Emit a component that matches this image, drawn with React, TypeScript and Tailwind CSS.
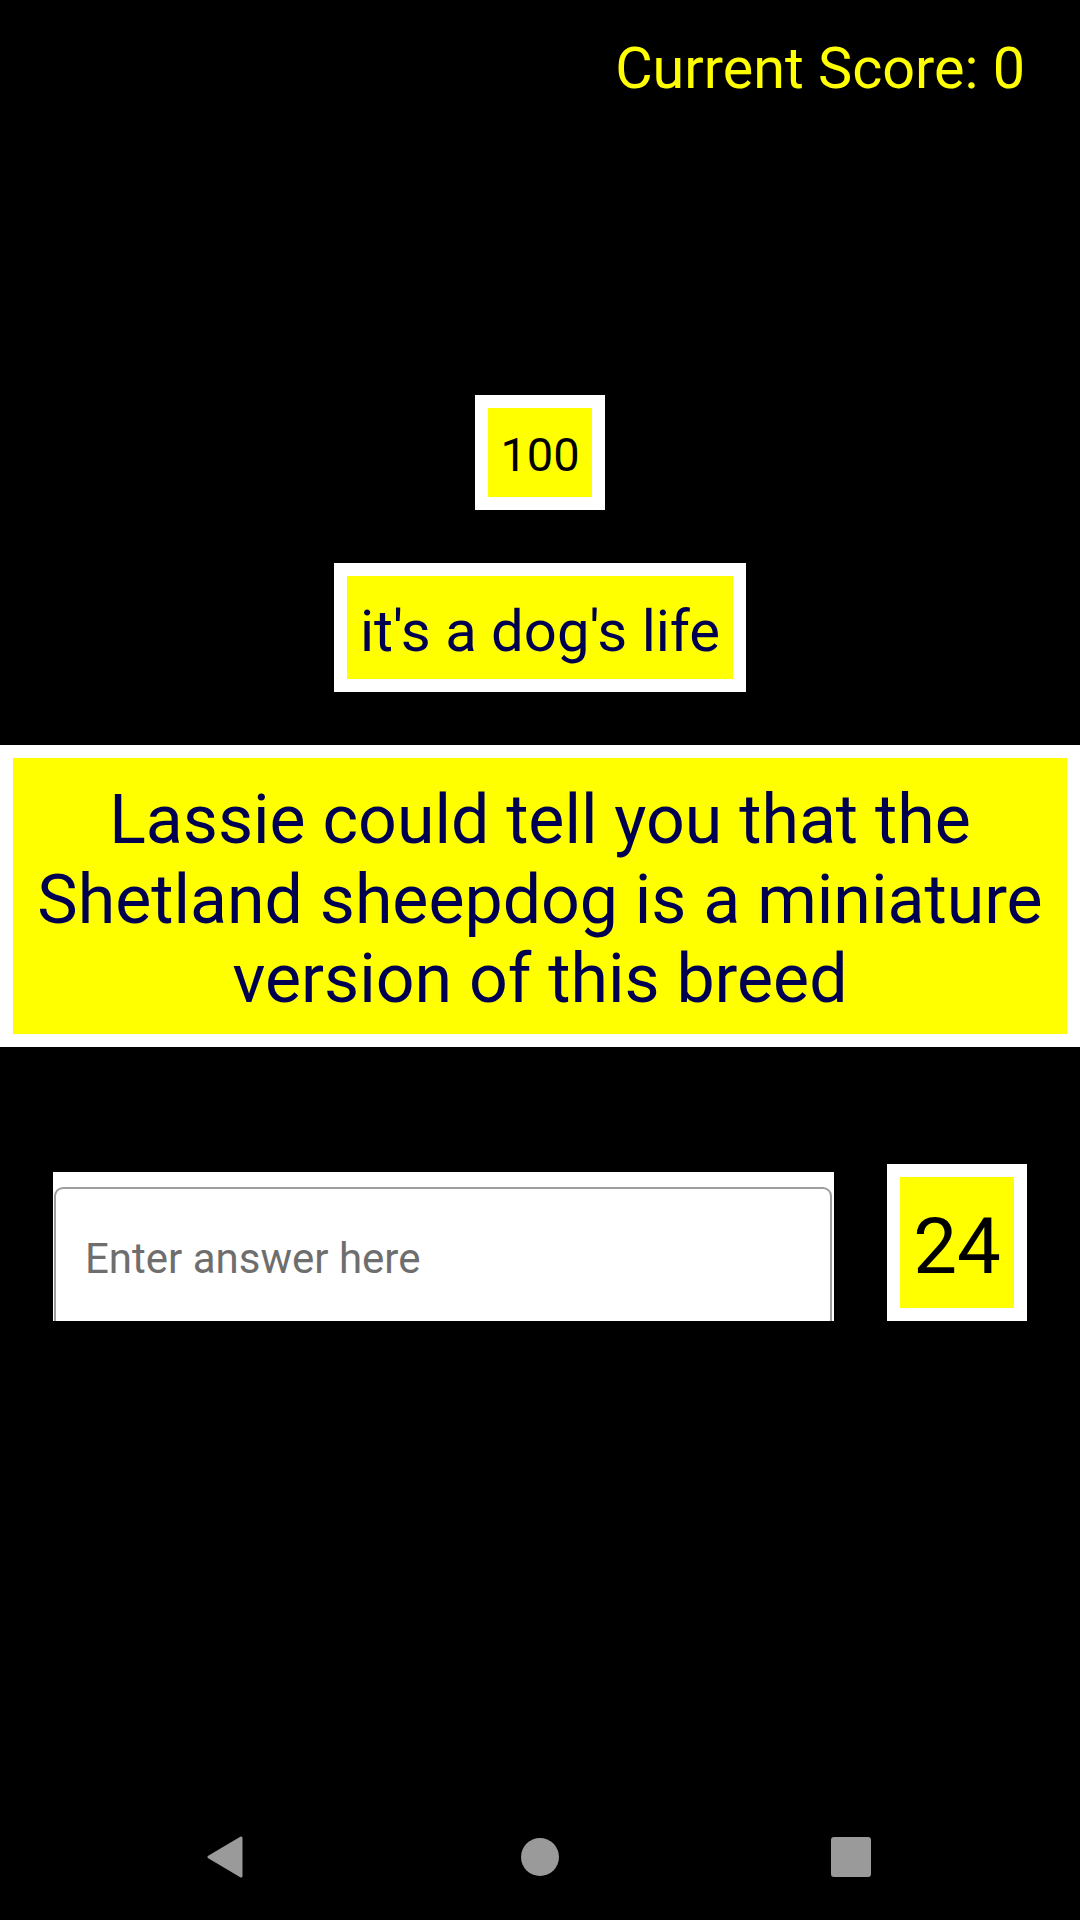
import React from 'react';

const App = () => {
  return (
    <div
      className="flex h-[1920px] w-[1080px] flex-col bg-black"
      style={{ fontFamily: 'Roboto, "Noto Sans", sans-serif' }}
    >
      {/* score */}
      <div className="flex justify-end pr-[55px] pt-[35px]">
        <span className="text-[57.5px] leading-[67px] text-[#ffff00]">Current Score: 0</span>
      </div>

      {/* points */}
      <div className="mt-[293px] flex justify-center">
        <div className="border-[13px] border-white">
          <div className="flex h-[89px] w-[104px] items-center justify-center bg-[#ffff00] pt-[3px] text-[47px] leading-[55px] text-black">
            100
          </div>
        </div>
      </div>

      {/* category */}
      <div className="mt-[53px] flex justify-center">
        <div className="border-[13px] border-white">
          <div className="flex h-[103px] w-[386px] items-center justify-center bg-[#ffff00] pt-[6px] text-[58px] leading-[68px] text-[#000050]">
            it's a dog's life
          </div>
        </div>
      </div>

      {/* question */}
      <div className="mt-[53px] bg-white p-[13px]">
        <div className="bg-[#ffff00] pb-[14px] pt-[23px] text-center text-[68px] leading-[79.5px] text-[#000050]">
          Lassie could tell you that the
          <br />
          Shetland sheepdog is a miniature
          <br />
          version of this breed
        </div>
      </div>

      {/* answer row */}
      <div className="mt-[117px] flex items-end justify-between px-[53px]">
        <div className="h-[149px] w-[781px] overflow-hidden bg-white pl-px pr-[2px] pt-[15px]">
          <input
            placeholder="Enter answer here"
            className="h-[200px] w-full rounded-[9px] border-2 border-[#9e9e9e] bg-white pb-[56px] pl-[29px] text-[42px] text-black outline-none placeholder:text-[#6e6e6e]"
          />
        </div>
        <div className="border-[13px] border-white">
          <div className="flex h-[131px] w-[114px] items-center justify-center bg-[#ffff00] pt-[8px] text-[78px] leading-[91px] text-black">
            24
          </div>
        </div>
      </div>

      {/* nav bar */}
      <div className="mt-auto flex h-[126px] items-center pl-[207px]">
        <svg width="36" height="42" viewBox="0 0 36 42">
          <polygon points="34,2 34,40 2,21" fill="#9a9a9a" stroke="#9a9a9a" strokeWidth="3" strokeLinejoin="round" />
        </svg>
        <div className="ml-[278px] h-[38px] w-[38px] rounded-full bg-[#9a9a9a]" />
        <div className="ml-[272px] h-[40px] w-[40px] rounded-[3px] bg-[#9a9a9a]" />
      </div>
    </div>
  );
};

export default App;
